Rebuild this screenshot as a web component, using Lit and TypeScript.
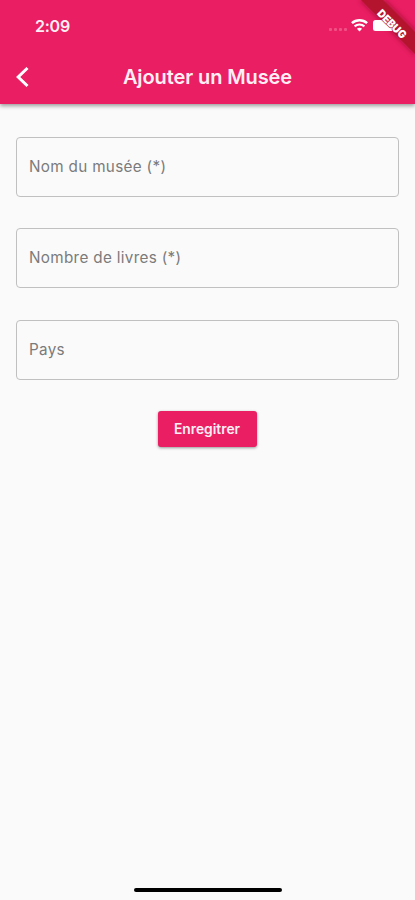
import { LitElement, html, css } from "lit";
import { customElement, property } from "lit/decorators.js";

@customElement("status-bar")
class StatusBar extends LitElement {
  static styles = css`
    :host { display: flex; height: 50px; align-items: center; justify-content: space-between; padding: 2px 20px 0 35px; box-sizing: border-box; }
    .time { font: 600 16px/20px Inter, sans-serif; letter-spacing: -0.25px; color: #ffeef4; }
    .icons { display: flex; align-items: center; padding-bottom: 2px; }
    .dots { display: flex; gap: 2px; padding: 9px 4px 0 0; }
    .dot { width: 3px; height: 3px; border-radius: 1px; background: #ef5185; }
    .wifi { display: block; }
    .battery { width: 22px; height: 11px; margin: 1px 0 0 5px; border-radius: 2.5px; background: #fff; }
  `;
  render() {
    return html`
      <span class="time">2:09</span>
      <div class="icons">
        <div class="dots">${[0, 1, 2, 3].map(() => html`<i class="dot"></i>`)}</div>
        <svg class="wifi" width="17" height="13" viewBox="0 0 17 13" fill="none" stroke="#fff">
          <path d="M.9 4.2C5.1.3 11.900.3 16.100 4.200" stroke-width="2.5" />
          <path d="M3.600 7.300C6.400 4.900 10.600 4.900 13.400 7.300" stroke-width="2.200" />
          <path d="M5.900 9.700C7.400 8.400 9.600 8.400 11.100 9.700L8.500 12.500Z" fill="#fff" stroke="none" />
        </svg>
        <div class="battery"></div>
      </div>
    `;
  }
}

@customElement("form-field")
class FormField extends LitElement {
  @property() label = "";
  static styles = css`
    :host { display: flex; align-items: center; height: 60px; box-sizing: border-box; padding: 0 11px; border: 1.5px solid #c0c0c0; border-radius: 4px; }
    .label { margin-left: 1px; font: 400 15.25px/20px Inter, sans-serif; letter-spacing: 0.32px; color: #7b7b7b; white-space: nowrap; }
  `;
  render() {
    return html`<span class="label">${this.label}</span>`;
  }
}

@customElement("app-root")
class AppRoot extends LitElement {
  static styles = css`
    :host { display: flex; flex-direction: column; position: relative; height: 900px; overflow: hidden; background: #fafafa; font-family: Inter, sans-serif; }
    .top { flex: none; height: 104px; background: #e91e63; color: #fff; box-shadow: 0 2px 4px rgba(0, 0, 0, 0.38); }
    .status { position: relative; z-index: 1; }
    .bar { display: grid; grid-template-columns: 48px 1fr 48px; align-items: center; height: 54px; }
    .back { display: block; margin-left: 15px; }
    .title { margin: 0; text-align: center; font: 600 20px/26px Inter, sans-serif; letter-spacing: -0.1px; color: #ffeef4; }
    .form { flex: 1; display: flex; flex-direction: column; gap: 31.3px; padding: 33px 16px 0; }
    .save { align-self: center; width: 99px; height: 36px; padding: 0 1px 0 0; border: 0; border-radius: 3px; background: #e91e63; color: #ffeef4; font: 600 13.8px/20px Inter, sans-serif; box-shadow: 0 1px 3px rgba(0, 0, 0, 0.4); }
    .home { flex: none; align-self: center; width: 148px; height: 4px; margin-bottom: 8px; border-radius: 2px; background: #000; }
    .ribbon { position: absolute; top: 0; right: 0; }
    .over { z-index: 2; }
    .debug { font: 900 11px Inter, sans-serif; }
  `;
  render() {
    return html`
      <header class="top">
        <svg class="ribbon" width="65" height="65" viewBox="0 0 65 65">
          <defs><filter id="shade"><feGaussianBlur stdDeviation="2" /></filter></defs>
          <path d="M9 0H36L65 29V56Z" fill="#8f0822" opacity=".5" filter="url(#shade)" />
          <path d="M11 0H33L65 32V54Z" fill="#b5142f" />
        </svg>
        <status-bar class="status"></status-bar>
        <div class="bar">
          <svg class="back" width="15" height="22" viewBox="0 0 15 22" fill="none" stroke="#fff" stroke-width="3">
            <path d="M12.500 2L3.200 11L12.500 20" />
          </svg>
          <h1 class="title">Ajouter un Musée</h1>
        </div>
      </header>
      <main class="form">
        <form-field label="Nom du musée (*)"></form-field>
        <form-field label="Nombre de livres (*)"></form-field>
        <form-field label="Pays"></form-field>
        <button class="save">Enregitrer</button>
      </main>
      <div class="home"></div>
      <svg class="ribbon over" width="65" height="65" viewBox="0 0 65 65">
        <text class="debug" x="42" y="28" transform="rotate(45 42 24)" text-anchor="middle" textLength="36" lengthAdjust="spacingAndGlyphs" fill="#fff" stroke="#b5142f" stroke-width="1.200" paint-order="stroke">DEBUG</text>
      </svg>
    `;
  }
}
